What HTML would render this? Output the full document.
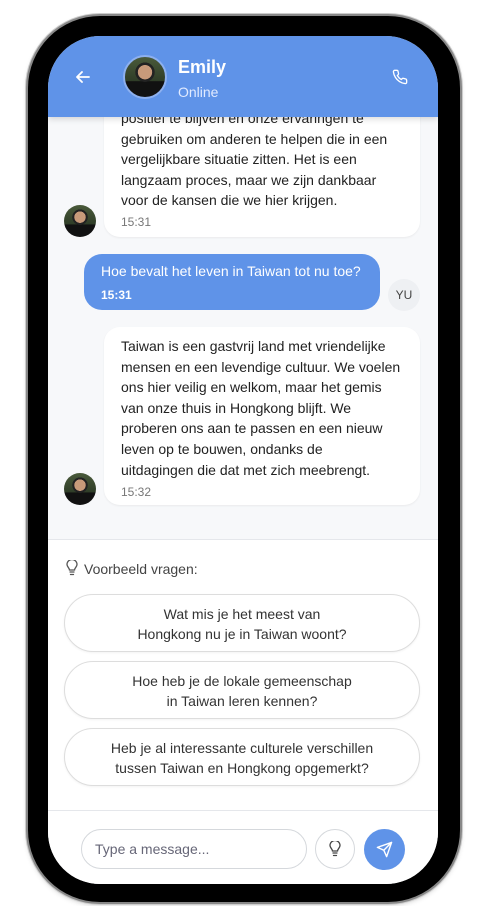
<!DOCTYPE html>
<html><head><meta charset="utf-8"><style>
*{box-sizing:border-box;margin:0;padding:0}
body{width:488px;height:906px;background:#fff;position:relative;overflow:hidden;font-family:"Liberation Sans",sans-serif;color:#222}
.frame{position:absolute;left:28px;top:16px;width:432px;height:886px;border-radius:72px;background:#000;box-shadow:0 0 0 2px #888,0 0 0 3px #ccc,0 2px 6px rgba(0,0,0,.3)}
.screen{position:absolute;left:48px;top:36px;width:390px;height:848px;border-radius:52px;background:#f7f8fa;overflow:hidden}
.hdr{position:absolute;left:0;top:0;width:390px;height:81px;background:#5f93e8;box-shadow:0 2px 6px rgba(0,0,0,.15);z-index:2}
.av{position:absolute;border-radius:50%;background:radial-gradient(circle at 50% 38%,#c89a7a 0 22%,#222 23% 30%,transparent 31%),linear-gradient(#4a5a3a,#2f3d28 60%,#111 61%)}
.b{position:absolute;background:#fff;border-radius:16px;box-shadow:0 1px 2px rgba(0,0,0,.06);font-size:14px;line-height:20.6px;color:#222;padding:0 10px 0 17px;white-space:nowrap}
.t{font-size:12px;color:#777}
.q{position:absolute;left:16px;width:356px;height:58px;border:1px solid #ddd;border-radius:29px;background:#fff;text-align:center;font-size:14px;line-height:20px;padding-top:9px;color:#333;box-shadow:0 1px 2px rgba(0,0,0,.05)}
.bot{position:absolute;left:0;top:503px;width:390px;height:345px;background:#fff;border-top:1px solid #e5e7eb}
</style></head><body>
<div class="frame"></div>
<div class="screen">
 <div class="hdr">
  <svg style="position:absolute;left:28px;top:34px" width="14" height="14" viewBox="0 0 14 14" fill="none" stroke="#fff" stroke-width="1.8" stroke-linecap="round" stroke-linejoin="round"><path d="M13 7H1M6 2L1 7l5 5"/></svg>
  <div class="av" style="left:75px;top:19px;width:44px;height:44px;border:2px solid #8db0ef"></div>
  <div style="position:absolute;left:130px;top:21px;color:#fff;font-weight:bold;font-size:18px">Emily</div>
  <div style="position:absolute;left:130px;top:48px;color:#e0eaff;font-size:14px">Online</div>
  <svg style="position:absolute;left:344px;top:33px" width="16" height="16" viewBox="0 0 24 24" fill="none" stroke="#fff" stroke-width="2" stroke-linejoin="round"><path d="M22 16.9v3a2 2 0 0 1-2.2 2 19.8 19.8 0 0 1-8.6-3.1 19.5 19.5 0 0 1-6-6A19.8 19.8 0 0 1 2.1 4.2 2 2 0 0 1 4.1 2h3a2 2 0 0 1 2 1.7c.1 1 .4 1.9.7 2.8a2 2 0 0 1-.5 2.1L8 9.8a16 16 0 0 0 6 6l1.3-1.3a2 2 0 0 1 2.1-.4c.9.3 1.8.6 2.8.7a2 2 0 0 1 1.7 2z"/></svg>
 </div>
 <div class="b" style="left:56px;top:50px;width:316px;height:151px;padding-top:22px">positief te blijven en onze ervaringen te<br>gebruiken om anderen te helpen die in een<br>vergelijkbare situatie zitten. Het is een<br>langzaam proces, maar we zijn dankbaar<br>voor de kansen die we hier krijgen.<div class="t" style="margin-top:1px">15:31</div></div>
 <div class="av" style="left:16px;top:169px;width:32px;height:32px"></div>
 <div style="position:absolute;left:36px;top:218px;width:296px;height:56px;background:#5f93e8;border-radius:18px;color:#fff;font-size:14px;padding:8px 17px;line-height:18px">Hoe bevalt het leven in Taiwan tot nu toe?<div style="font-size:12px;margin-top:6px;font-weight:bold">15:31</div></div>
 <div style="position:absolute;left:340px;top:243px;width:32px;height:32px;border-radius:50%;background:#eef0f3;font-size:12px;color:#444;text-align:center;line-height:32px">YU</div>
 <div class="b" style="left:56px;top:291px;width:316px;height:178px;padding-top:9px">Taiwan is een gastvrij land met vriendelijke<br>mensen en een levendige cultuur. We voelen<br>ons hier veilig en welkom, maar het gemis<br>van onze thuis in Hongkong blijft. We<br>proberen ons aan te passen en een nieuw<br>leven op te bouwen, ondanks de<br>uitdagingen die dat met zich meebrengt.<div class="t" style="margin-top:2px">15:32</div></div>
 <div class="av" style="left:16px;top:437px;width:32px;height:32px"></div>
 <div class="bot">
  <svg style="position:absolute;left:18px;top:20px" width="12" height="16" viewBox="0 0 12 16" fill="none" stroke="#555" stroke-width="1.3" stroke-linecap="round"><path d="M4 12h4M4.5 14.5h3M3.5 10c0-2-2.5-3-2.5-5.5a5 5 0 0 1 10 0C11 7 8.5 8 8.5 10z"/></svg>
  <div style="position:absolute;left:36px;top:21px;font-size:14px;color:#444">Voorbeeld vragen:</div>
  <div class="q" style="top:54px">Wat mis je het meest van<br>Hongkong nu je in Taiwan woont?</div>
  <div class="q" style="top:121px">Hoe heb je de lokale gemeenschap<br>in Taiwan leren kennen?</div>
  <div class="q" style="top:188px">Heb je al interessante culturele verschillen<br>tussen Taiwan en Hongkong opgemerkt?</div>
  <div style="position:absolute;left:0;top:270px;width:390px;border-top:1px solid #e5e7eb"></div>
  <div style="position:absolute;left:33px;top:289px;width:226px;height:40px;border:1px solid #d5d8dc;border-radius:20px;font-size:14px;color:#667;padding:11px 13px">Type a message...</div>
  <div style="position:absolute;left:267px;top:289px;width:40px;height:40px;border:1px solid #d5d8dc;border-radius:50%"><svg style="position:absolute;left:13px;top:11px" width="12" height="16" viewBox="0 0 12 16" fill="none" stroke="#444" stroke-width="1.3" stroke-linecap="round"><path d="M4 12h4M4.5 14.5h3M3.5 10c0-2-2.5-3-2.5-5.5a5 5 0 0 1 10 0C11 7 8.5 8 8.5 10z"/></svg></div>
  <div style="position:absolute;left:316px;top:289px;width:41px;height:41px;background:#5f93e8;border-radius:50%"><svg style="position:absolute;left:12px;top:12px" width="17" height="17" viewBox="0 0 24 24" fill="none" stroke="#fff" stroke-width="2" stroke-linejoin="round" stroke-linecap="round"><path d="M22 2L11 13M22 2l-7 20-4-9-9-4z"/></svg></div>
 </div>
</div>
</body></html>
